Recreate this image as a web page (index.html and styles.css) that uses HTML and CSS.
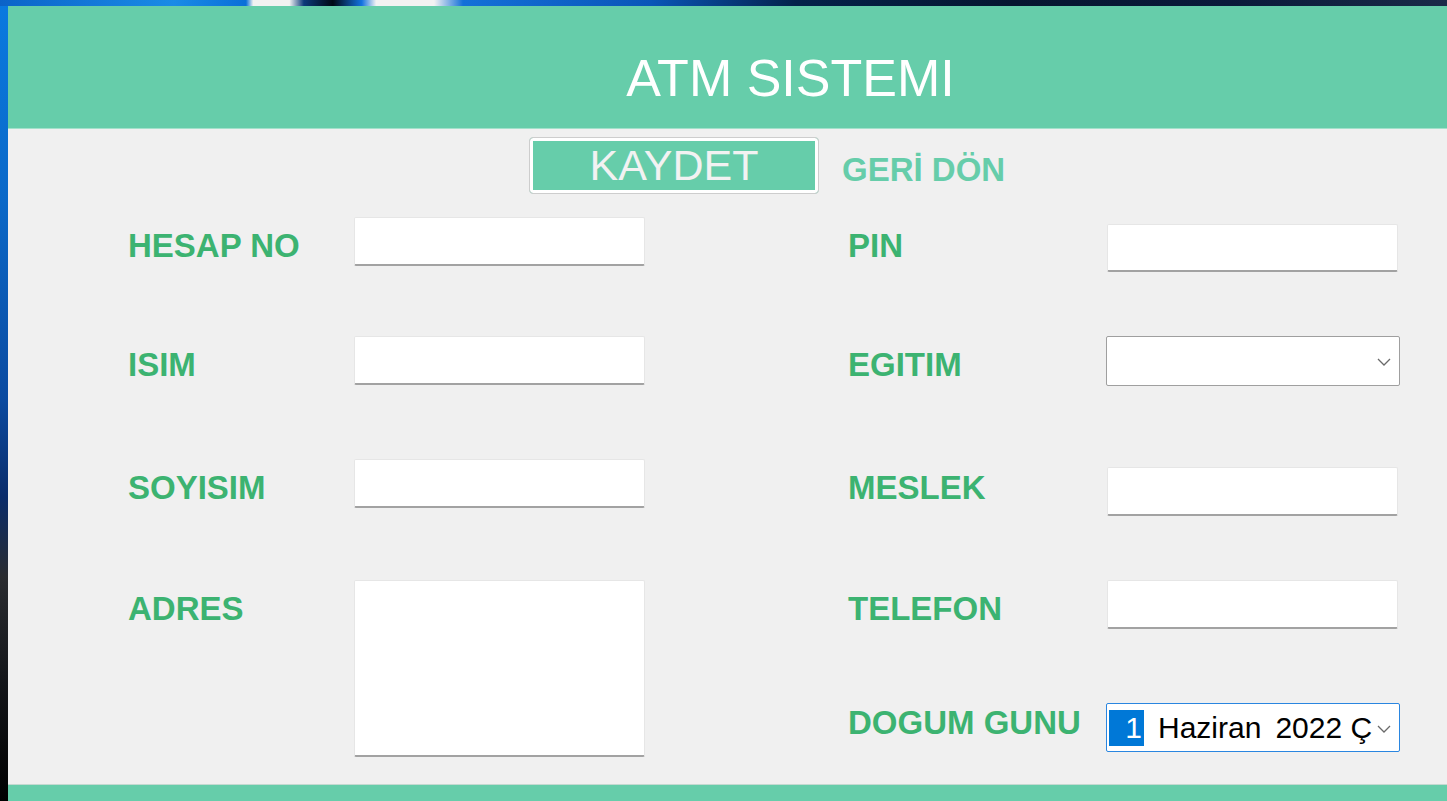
FILE: index.html
```html
<!DOCTYPE html>
<html lang="tr">
<head>
<meta charset="utf-8">
<title>ATM SISTEMI</title>
<link rel="stylesheet" href="styles.css">
</head>
<body>
<div class="window">
  <header class="header">
    <h1 class="title">ATM SISTEMI</h1>
  </header>
  <main class="content">
    <div class="actions">
      <button class="btn-save" type="button">KAYDET</button>
      <a class="link-back">GERİ DÖN</a>
    </div>
    <div class="form">
      <label class="lbl r1 c1">HESAP NO</label>
      <input class="field r1 c2" type="text">
      <label class="lbl r1 c3">PIN</label>
      <input class="field r1 c4 off7" type="text">

      <label class="lbl r2 c1">ISIM</label>
      <input class="field r2 c2" type="text">
      <label class="lbl r2 c3">EGITIM</label>
      <div class="select r2 c4">
        <svg class="chev" width="14" height="8" viewBox="0 0 14 8"><path d="M1 1 L7 7 L13 1" fill="none" stroke="#6a6a6a" stroke-width="1.3"/></svg>
      </div>

      <label class="lbl r3 c1">SOYISIM</label>
      <input class="field r3 c2" type="text">
      <label class="lbl r3 c3">MESLEK</label>
      <input class="field r3 c4 off8" type="text">

      <label class="lbl r4 c1">ADRES</label>
      <textarea class="field area r4 c2"></textarea>
      <label class="lbl r4 c3">TELEFON</label>
      <input class="field r4 c4" type="text">

      <label class="lbl r5 c3 lbl-top">DOGUM GUNU</label>
      <div class="date r5 c4">
        <span class="sel">1</span>
        <span class="date-text">Haziran</span>
        <span class="date-text">2022 Ç</span>
        <svg class="chev" width="14" height="8" viewBox="0 0 14 8"><path d="M1 1 L7 7 L13 1" fill="none" stroke="#6a6a6a" stroke-width="1.3"/></svg>
      </div>
    </div>
  </main>
  <footer class="footer"></footer>
</div>
</body>
</html>
```

FILE: styles.css
```css
html, body {
  margin: 0;
  padding: 0;
  height: 100%;
  overflow: hidden;
}
body {
  font-family: "Liberation Sans", Arial, sans-serif;
  background:
    linear-gradient(to right, #0b63c8 0, #1a8be6 12%, #0a6fd8 17%, #f2f2f2 17.5%, #f2f2f2 20%, #0c3a7a 21%, #000814 23%, #1372e0 25%, #f2f2f2 26%, #f2f2f2 30%, #1470d8 32%, #0a55b8 45%, #04224a 55%, #061630 70%, #0a1a3a 85%, #1a2a48 100%) 0 0 / 100% 6px no-repeat,
    linear-gradient(to bottom, #0a7ae0 0%, #0a68c8 25%, #0a4aa0 50%, #0a2c6a 62%, #2a2c30 72%, #14161a 85%, #000 100%);
}
.window {
  margin: 6px 0 0 8px;
  height: calc(100vh - 6px);
  display: flex;
  flex-direction: column;
  background: #f0f0f0;
}
.header {
  height: 122px;
  background: #66cdaa;
  border-bottom: 1px solid #a3e1cb;
  box-sizing: content-box;
}
.title {
  margin: 0;
  padding: 47px 0 0 126px;
  text-align: center;
  font-weight: normal;
  font-size: 52px;
  line-height: 51px;
  color: #ffffff;
}
.content {
  flex: 1;
  min-height: 0;
}
.actions {
  display: flex;
  align-items: center;
  gap: 23px;
  padding: 8px 0 0 521px;
}
.btn-save {
  width: 290px;
  height: 57px;
  box-sizing: border-box;
  border: 1px solid #cdcdcd;
  border-radius: 4px;
  background: #66cdaa;
  box-shadow: inset 0 0 0 3px #ffffff;
  font-family: "Liberation Sans", Arial, sans-serif;
  font-size: 43px;
  line-height: 1;
  color: #f2f2f2;
  padding: 0;
}
.link-back {
  margin-top: 8px;
  font-size: 33px;
  font-weight: bold;
  color: #66cdaa;
}
.form {
  display: grid;
  margin: 23px 0 0 120px;
  grid-template-columns: 226px 291px 203px 259px 291px;
  grid-template-rows: 119px 123px 121px 123px auto;
  align-items: start;
}
.r1 { grid-row: 1; }
.r2 { grid-row: 2; }
.r3 { grid-row: 3; }
.r4 { grid-row: 4; }
.r5 { grid-row: 5; }
.c1 { grid-column: 1; }
.c2 { grid-column: 2; }
.c3 { grid-column: 4; }
.c4 { grid-column: 5; }
.lbl {
  padding-top: 10px;
  font-size: 33px;
  font-weight: bold;
  line-height: 37px;
  color: #3cb371;
  white-space: nowrap;
}
.lbl-top { padding-top: 1px; }
.field {
  display: block;
  width: 291px;
  height: 49px;
  box-sizing: border-box;
  margin: 0;
  padding: 0 8px;
  background: #ffffff;
  border: 1px solid #e6e6e6;
  border-bottom: 2px solid #a2a2a2;
  border-radius: 2px;
  font-family: "Liberation Sans", Arial, sans-serif;
  font-size: 28px;
  outline: none;
  appearance: none;
}
.off7 { margin-top: 7px; height: 48px; }
.off8 { margin-top: 8px; }
.area {
  grid-row: 4 / span 2;
  height: 177px;
  resize: none;
}
.select {
  position: relative;
  width: 294px;
  height: 50px;
  box-sizing: border-box;
  margin-left: -1px;
  background: #ffffff;
  border: 1px solid #9f9f9f;
  border-radius: 2px;
}
.chev {
  position: absolute;
  right: 8px;
  top: 50%;
  margin-top: -3px;
}
.date {
  position: relative;
  width: 294px;
  height: 49px;
  box-sizing: border-box;
  margin-left: -1px;
  background: #ffffff;
  border: 1px solid #2a86e0;
  border-radius: 2px;
  display: flex;
  align-items: center;
  gap: 14px;
  padding-left: 2px;
}
.date-text {
  white-space: nowrap;
  font-size: 30px;
  line-height: 36px;
  color: #000;
}
.sel {
  display: block;
  width: 35px;
  height: 36px;
  text-align: right;
  padding-right: 2px;
  box-sizing: border-box;
  background: #0078d7;
  color: #ffffff;
  font-size: 30px;
  line-height: 36px;
}
.footer {
  height: 16px;
  background: #66cdaa;
  border-top: 1px solid #c4d9d1;
}
```
